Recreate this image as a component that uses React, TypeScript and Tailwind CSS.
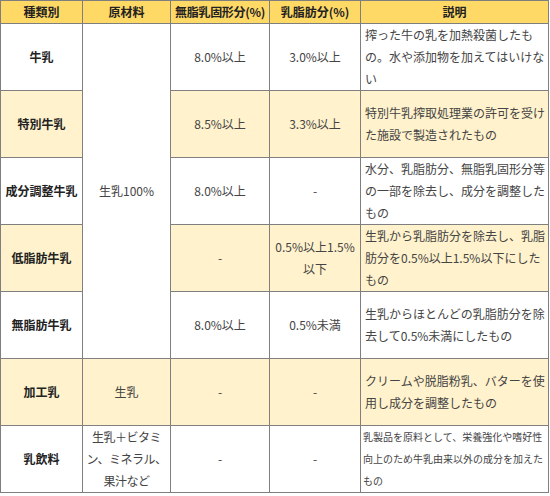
const rows = [
  {
    kind: '牛乳',
    solid: '8.0%以上',
    fat: '3.0%以上',
    desc: '搾った牛の乳を加熱殺菌したもの。水や添加物を加えてはいけない',
  },
  {
    kind: '特別牛乳',
    solid: '8.5%以上',
    fat: '3.3%以上',
    desc: '特別牛乳搾取処理業の許可を受けた施設で製造されたもの',
  },
  {
    kind: '成分調整牛乳',
    solid: '8.0%以上',
    fat: '-',
    desc: '水分、乳脂肪分、無脂乳固形分等の一部を除去し、成分を調整したもの',
  },
  {
    kind: '低脂肪牛乳',
    solid: '-',
    fat: '0.5%以上1.5%以下',
    desc: '生乳から乳脂肪分を除去し、乳脂肪分を0.5%以上1.5%以下にしたもの',
  },
  {
    kind: '無脂肪牛乳',
    solid: '8.0%以上',
    fat: '0.5%未満',
    desc: '生乳からほとんどの乳脂肪分を除去して0.5%未満にしたもの',
  },
];

const cell = 'border border-[#7f7f7f] text-center align-middle';
const desc = `${cell} text-left pl-[4px] pr-[2px] leading-[22px] text-[12px]`;

export default function App() {
  return (
    <div
      className="w-[550px] bg-white text-[12px] text-[#444]"
      style={{ fontFamily: '"Noto Sans CJK JP", "Noto Sans", sans-serif' }}
    >
      <table className="w-[549px] border-collapse table-fixed">
        <colgroup>
          <col className="w-[82px]" />
          <col className="w-[88px]" />
          <col className="w-[99px]" />
          <col className="w-[91px]" />
          <col />
        </colgroup>
        <thead>
          <tr className="h-[23px] bg-[#ffd966] text-[#222] font-bold">
            <th className={cell}>種類別</th>
            <th className={cell}>原材料</th>
            <th className={`${cell} whitespace-nowrap px-0 tracking-[-0.3px]`}>無脂乳固形分(%)</th>
            <th className={`${cell} whitespace-nowrap`}>乳脂肪分(%)</th>
            <th className={cell}>説明</th>
          </tr>
        </thead>
        <tbody>
          {rows.map((r, i) => (
            <tr key={r.kind} className={`h-[67px] ${i % 2 === 1 ? 'bg-[#fff2cc]' : 'bg-white'}`}>
              <td className={`${cell} font-bold text-[#222]`}>{r.kind}</td>
              {i === 0 && (
                <td rowSpan={5} className={`${cell} bg-white`}>
                  生乳100%
                </td>
              )}
              <td className={cell}>{r.solid}</td>
              <td className={`${cell} leading-[22px]`}>{r.fat}</td>
              <td className={desc}>{r.desc}</td>
            </tr>
          ))}
          <tr className="h-[67px] bg-[#fff2cc]">
            <td className={`${cell} font-bold text-[#222]`}>加工乳</td>
            <td className={cell}>生乳</td>
            <td className={cell}>-</td>
            <td className={cell}>-</td>
            <td className={desc}>クリームや脱脂粉乳、バターを使用し成分を調整したもの</td>
          </tr>
          <tr className="h-[67px] bg-white">
            <td className={`${cell} font-bold text-[#222]`}>乳飲料</td>
            <td className={`${cell} leading-[22px] px-0 whitespace-nowrap tracking-[-0.5px]`}>
              生乳＋ビタミ
              <br />
              ン、ミネラル、
              <br />
              果汁など
            </td>
            <td className={cell}>-</td>
            <td className={cell}>-</td>
            <td className={`${cell} text-left px-[2px] leading-[22px] text-[10px]`}>
              乳製品を原料として、栄養強化や嗜好性向上のため牛乳由来以外の成分を加えたもの
            </td>
          </tr>
        </tbody>
      </table>
    </div>
  );
}
